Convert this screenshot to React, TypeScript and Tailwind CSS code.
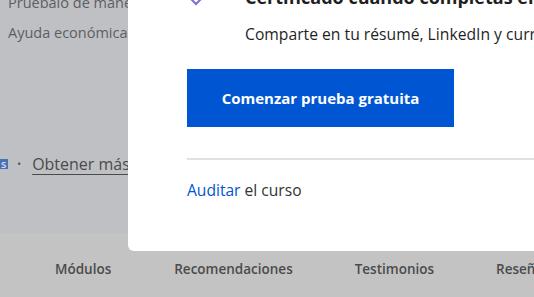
import React from "react";

export default function App() {
  return (
    <div
      className="relative w-[534px] h-[297px] overflow-hidden bg-[#bfc0c3]"
      style={{ fontFamily: '"Open Sans", "Noto Sans", sans-serif' }}
    >
      {/* background page */}
      <div className="flex flex-col h-full">
        <div className="flex-1 pl-[8px] text-[14.5px] text-[#5d5e62]">
          <div className="-mt-[9px] leading-[24px] whitespace-nowrap">Pruébalo de manera gratuita</div>
          <div className="mt-[6px] leading-[24px] whitespace-nowrap">Ayuda económica disponible</div>
          <div className="mt-[107px] -ml-[8px] flex items-center gap-[9px] text-[16px] whitespace-nowrap">
            <span className="bg-[#4b70b3] text-[#d8def0] text-[11px] leading-[10px] h-[10px] pl-[1px] pr-[2px] font-semibold">s</span>
            <span className="text-[#4a4a4d] text-[10px]">•</span>
            <span className="underline underline-offset-[4px] decoration-1 text-[#4a4a4d] ml-[2px]">Obtener más información</span>
          </div>
        </div>
        <div className="h-[64px] bg-[#c3c3c3] flex items-center pt-[8px] text-[13.5px] font-semibold text-[#4b4b4b] whitespace-nowrap">
          <span className="ml-[55px]">Módulos</span>
          <span className="ml-[63px]">Recomendaciones</span>
          <span className="ml-[62px]">Testimonios</span>
          <span className="ml-[62px]">Reseñas</span>
        </div>
      </div>

      {/* modal */}
      <div className="absolute left-[128px] top-0 w-[420px] h-[251px] bg-white rounded-bl-[6px] overflow-hidden">
        <div className="pl-[59px]">
          <div className="flex -mt-[14px]">
            <div className="w-[58px] shrink-0 pt-[12px] pl-[3px]">
              <svg width="12" height="8" viewBox="0 0 12 8">
                <path d="M1 1 L6 6 L11 1" fill="none" stroke="#7b6fd8" strokeWidth="2" />
              </svg>
            </div>
            <div>
              <div className="text-[18px] font-bold text-[#1f1f1f] leading-[22px] whitespace-nowrap">
                Certificado cuando completas el curso
              </div>
              <div className="mt-[15px] text-[15.7px] text-[#1f1f1f] leading-[22px] whitespace-nowrap">
                Comparte en tu résumé, LinkedIn y currículum
              </div>
            </div>
          </div>
          <button className="mt-[24px] w-[267px] h-[58px] bg-[#0056d2] text-white text-[15px] font-bold flex items-center justify-center">
            Comenzar prueba gratuita
          </button>
          <div className="mt-[31px] h-[2px] bg-[#e1e1e1] mr-[3px]" />
          <div className="mt-[19px] text-[15.6px] leading-[22px]">
            <span className="text-[#0056d2]">Auditar</span>
            <span className="text-[#333333]"> el curso</span>
          </div>
        </div>
      </div>
    </div>
  );
}
